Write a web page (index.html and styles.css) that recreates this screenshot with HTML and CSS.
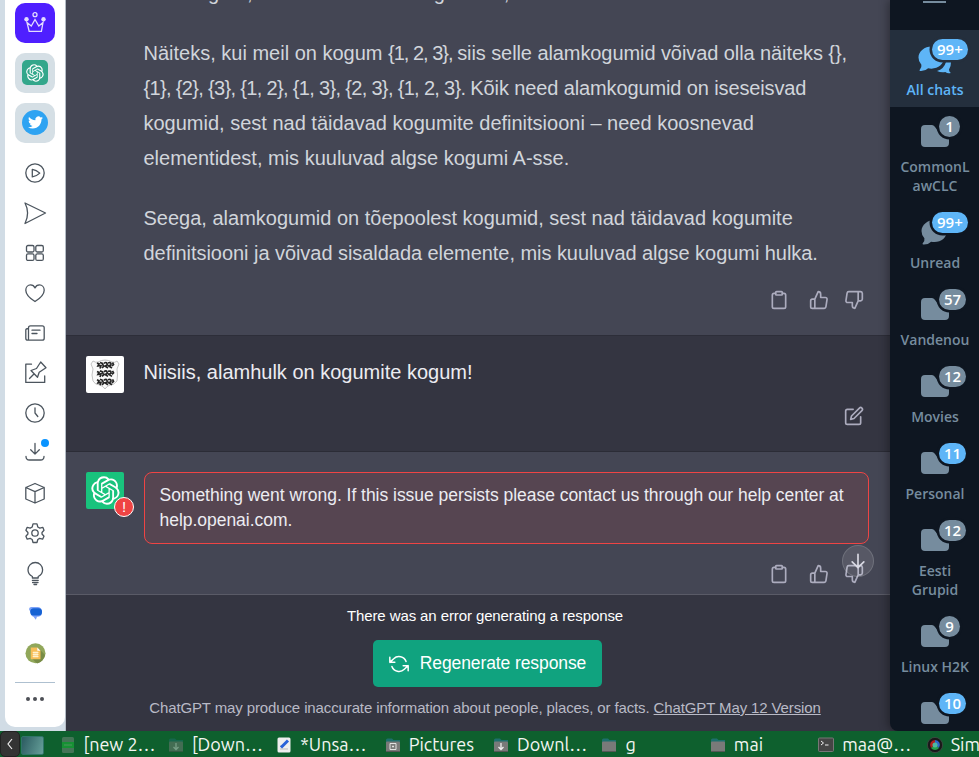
FILE: index.html
```html
<!DOCTYPE html>
<html lang="et">
<head>
<meta charset="utf-8">
<title>Chat</title>
<link rel="stylesheet" href="styles.css">
</head>
<body>
<svg class="defs" width="0" height="0">
  <symbol id="openai" viewBox="0 0 41 41"><path fill="currentColor" d="M37.532 16.87a9.963 9.963 0 0 0-.856-8.184 10.078 10.078 0 0 0-10.855-4.835A9.964 9.964 0 0 0 18.306.5a10.079 10.079 0 0 0-9.614 6.977 9.967 9.967 0 0 0-6.664 4.834 10.08 10.08 0 0 0 1.24 11.817 9.965 9.965 0 0 0 .856 8.185 10.079 10.079 0 0 0 10.855 4.835 9.965 9.965 0 0 0 7.516 3.35 10.078 10.078 0 0 0 9.617-6.981 9.967 9.967 0 0 0 6.663-4.834 10.079 10.079 0 0 0-1.243-11.813ZM22.498 37.886a7.474 7.474 0 0 1-4.799-1.735c.061-.033.168-.091.237-.134l7.964-4.6a1.294 1.294 0 0 0 .655-1.134V19.054l3.366 1.944a.12.12 0 0 1 .066.092v9.299a7.505 7.505 0 0 1-7.49 7.496ZM6.392 31.006a7.471 7.471 0 0 1-.894-5.023c.06.036.162.099.237.141l7.964 4.6a1.297 1.297 0 0 0 1.308 0l9.724-5.614v3.888a.12.12 0 0 1-.048.103l-8.051 4.649a7.504 7.504 0 0 1-10.24-2.744ZM4.297 13.62A7.469 7.469 0 0 1 8.2 10.333c0 .068-.004.19-.004.274v9.201a1.294 1.294 0 0 0 .654 1.132l9.723 5.614-3.366 1.944a.12.12 0 0 1-.114.01L7.04 23.856a7.504 7.504 0 0 1-2.743-10.237Zm27.658 6.437-9.724-5.615 3.367-1.943a.121.121 0 0 1 .113-.01l8.052 4.648a7.498 7.498 0 0 1-1.158 13.528v-9.476a1.293 1.293 0 0 0-.65-1.132Zm3.35-5.043c-.059-.037-.162-.099-.236-.141l-7.965-4.6a1.298 1.298 0 0 0-1.308 0l-9.723 5.614v-3.888a.12.12 0 0 1 .048-.103l8.05-4.645a7.497 7.497 0 0 1 11.135 7.763Zm-21.063 6.929-3.367-1.944a.12.12 0 0 1-.065-.092v-9.299a7.497 7.497 0 0 1 12.293-5.756 6.94 6.94 0 0 0-.236.134l-7.965 4.6a1.294 1.294 0 0 0-.654 1.132l-.006 11.225Zm1.829-3.943 4.33-2.501 4.332 2.5v5l-4.331 2.5-4.331-2.5V18Z"/></symbol>
  <symbol id="clipboard" viewBox="0 0 24 24"><path d="M16 4h2a2 2 0 0 1 2 2v14a2 2 0 0 1-2 2H6a2 2 0 0 1-2-2V6a2 2 0 0 1 2-2h2"/><rect x="8" y="2" width="8" height="4" rx="1"/></symbol>
  <symbol id="up" viewBox="0 0 24 24"><path d="M14 9V5a3 3 0 0 0-3-3l-4 9v11h11.28a2 2 0 0 0 2-1.7l1.38-9a2 2 0 0 0-2-2.3zM7 22H4a2 2 0 0 1-2-2v-7a2 2 0 0 1 2-2h3"/></symbol>
  <symbol id="down" viewBox="0 0 24 24"><path d="M10 15v4a3 3 0 0 0 3 3l4-9V2H5.72a2 2 0 0 0-2 1.7l-1.38 9a2 2 0 0 0 2 2.3zm7-13h2.67A2.31 2.31 0 0 1 22 4v7a2.31 2.31 0 0 1-2.33 2H17"/></symbol>
  <symbol id="folder" viewBox="0 0 28 22"><path fill="currentColor" d="M4 0h7q1.600 0 2.600 1.500l2.400 3q1 1.500 3 1.500h5q4 0 4 4v8q0 4-4 4H4q-4 0-4-4V4q0-4 4-4z"/></symbol>
  <symbol id="bubble" viewBox="0 0 28 27"><path fill="currentColor" d="M14 1C21 1 27 6 27 12.500S21 24 14 24q-2 0-3.500-.5Q7 27 2 26.500q-1-.5 0-1.500 2-2 1.500-5Q.5 17 .5 12.500C.5 6 7 1 14 1z"/></symbol>
  <symbol id="dir" viewBox="0 0 16 16"><path d="M1 3q0-1.500 1.500-1.500H7L8.500 3H15v4H1z" fill="#1e6f6d"/><rect x="1" y="4.500" width="14" height="10.500" rx="1" fill="#797a79"/><path d="M1 14.500h14" stroke="#565856"/></symbol>
</svg>
<div class="screen">
  <div class="work">
    <aside class="rail">
      <div class="rail-card">
        <div class="tile crown"><svg width="24" height="24" viewBox="0 0 24 24"><g fill="none" stroke="#e3dcff" stroke-width="1.300"><path d="M4 11.500l2.200 8.800h12.200l1.600-8.800-4.200 3.600L12 8.500l-3.700 6.600z"/><circle cx="12" cy="3.700" r="2"/></g><circle cx="3.500" cy="8.300" r="2.200" fill="#e3dcff"/><circle cx="20.500" cy="8.300" r="2.200" fill="#e3dcff"/></svg></div>
        <div class="tile"><span class="gpt"><svg width="18" height="18"><use href="#openai"/></svg></span></div>
        <div class="tile last"><span class="bird"><svg width="15" height="15" viewBox="0 0 24 24"><path fill="#fff" d="M23.953 4.570a10 10 0 01-2.825.775 4.958 4.958 0 002.163-2.723c-.951.555-2.005.959-3.127 1.184a4.920 4.920 0 00-8.384 4.482C7.690 8.095 4.067 6.130 1.640 3.162a4.822 4.822 0 00-.666 2.475c0 1.710.870 3.213 2.188 4.096a4.904 4.904 0 01-2.228-.616v.06a4.923 4.923 0 003.946 4.827 4.996 4.996 0 01-2.212.085 4.936 4.936 0 004.604 3.417 9.867 9.867 0 01-6.102 2.105c-.39 0-.779-.023-1.170-.067a13.995 13.995 0 007.557 2.209c9.053 0 13.998-7.496 13.998-13.985 0-.21 0-.42-.015-.63A9.935 9.935 0 0024 4.590z"/></svg></span></div>
        <div class="cell"><svg viewBox="0 0 24 24"><circle cx="12" cy="12" r="9.200"/><path d="M9.300 8.300v7.600q4-.5 7.500-3.800-3.500-3.300-7.500-3.800z"/></svg></div>
        <div class="cell"><svg viewBox="0 0 24 24"><path d="M2 2l20.500 10L2 22.500Q7.200 12 2 2z"/></svg></div>
        <div class="cell"><svg viewBox="0 0 24 24"><rect x="3.500" y="4.500" width="7.500" height="6.500" rx="1.500"/><rect x="12.800" y="4.500" width="7.500" height="6.500" rx="1.500"/><rect x="3.500" y="12.900" width="7.500" height="6.500" rx="1.500"/><rect x="12.800" y="12.900" width="7.500" height="6.500" rx="1.500"/></svg></div>
        <div class="cell"><svg viewBox="0 0 24 24"><path d="M12 20.500C8 18 2.800 14 2.800 9.200 2.800 6 5 3.900 7.500 3.900c2 0 3.700 1.100 4.500 3 .8-1.900 2.500-3 4.500-3 2.500 0 4.700 2.100 4.700 5.300 0 4.800-5.200 8.800-9.200 11.300z"/></svg></div>
        <div class="cell"><svg viewBox="0 0 24 24"><path d="M5.500 19.200V6.800q0-2 2-2h11.700q2 0 2 2v10.400q0 2-2 2H4.800q-2 0-2-2V9q0-1.500 2.500-1.500M9 9.200h8M9 12.500h5"/></svg></div>
        <div class="cell"><svg viewBox="0 0 24 24"><path d="M8.500 3.200H2.800v18.200h18.900V15M6.500 17.500l4.700-4.700M8 9.500l6.500 6.800 1.700-5 6.800-4.500-5.300-5.800-4.200 6.500z"/></svg></div>
        <div class="cell"><svg viewBox="0 0 24 24"><circle cx="12" cy="12" r="9.200"/><path d="M12 6.800V12l2.800 3.500"/></svg></div>
        <div class="cell"><svg viewBox="0 0 24 24"><path d="M12 2.500v10.500M7.700 8.800l4.300 4.300 4.300-4.300M3 15.500q0 3.500 3.500 3.500h11q3.500 0 3.500-3.500"/></svg><i class="dot"></i></div>
        <div class="cell"><svg viewBox="0 0 24 24"><path d="M12 2.500l9.200 4v11.500L12 22 2.800 18V6.500zM2.800 6.500l9.200 4.200 9.200-4.200M12 10.700V22"/></svg></div>
        <div class="cell"><svg viewBox="0 0 24 24"><circle cx="12" cy="12" r="3.200"/><path d="M10 2.800h4l.8 3.200 2 1.100 3-.8 1.200 3-2 2.200v1.500l2 2.200-1.400 3-3-.8-1.800 1.100-.8 3h-4l-.8-3-2-1.100-3 .8-1.300-3 2-2.200v-1.500L2.900 9.300l1.300-3 3 .8 2-1.100z"/></svg></div>
        <div class="cell"><svg viewBox="0 0 24 24"><path d="M9.400 17v-1.500Q5 13.500 5 8.800a7.300 7.300 0 0 1 14.600 0q0 4.700-4.400 6.700V17zM9.400 19.400h5.800M9.600 21.500h5.400M11 23.500h2.600"/></svg></div>
        <div class="cell"><svg viewBox="0 0 24 24" class="fill"><path fill="#7da2f8" d="M8 6h7q4 .5 4 5t-4 4.700h-1l-1.200 3-2.300-3q-2.500-.5-2.500-3.500L6 8.200Q6 6.500 8 6z"/><rect x="7.200" y="7.200" width="11.800" height="7.300" rx="3.500" fill="#1662d3"/></svg></div>
        <div class="cell"><svg viewBox="0 0 24 24" class="fill"><circle cx="12.500" cy="12.300" r="10" fill="#91a75a"/><path d="M16 7.500l6 6.500q-2 7-8 8.500l-5-5z" fill="#788c47"/><path d="M7.800 6.500h6.500l3.200 3.300v8.500H7.800z" fill="#f7be58"/><path d="M14.300 6.500v3.300h3.200z" fill="#fff"/><path d="M10.300 11.500h4.600M10.300 13.500h4.600M10.300 15.500h4.600" stroke="#fff1cf" stroke-width="1.300"/></svg></div>
        <hr>
        <div class="dots"><i></i><i></i><i></i></div>
      </div>
    </aside>
    <main class="chat">
      <section class="row answer">
        <div class="prose">
          <p>alamkogum, kui see ka osaleb algse osa, sest see on ise osa.</p>
          <p>Näiteks, kui meil on kogum <span class="set1">{1, 2, 3}, </span><span class="t1">siis selle alamkogumid võivad olla näiteks {},</span><br><span class="set2">{1}, {2}, {3}, {1, 2}, {1, 3}, {2, 3}, {1, 2, 3}. </span><span class="t2">Kõik need alamkogumid on iseseisvad</span><br>kogumid, sest nad täidavad kogumite definitsiooni – need koosnevad<br>elementidest, mis kuuluvad algse kogumi A-sse.</p>
          <p>Seega, alamkogumid on tõepoolest kogumid, sest nad täidavad kogumite<br><span class="t3">definitsiooni ja võivad sisaldada elemente, mis kuuluvad algse kogumi hulka.</span></p>
        </div>
        <div class="actions"><svg class="ico"><use href="#clipboard"/></svg><svg class="ico"><use href="#up"/></svg><svg class="ico"><use href="#down"/></svg></div>
      </section>
      <section class="row user">
        <div class="avatar arms"><svg width="38" height="37" viewBox="0 0 38 37"><path d="M7 5q3 2 5 1 7-4 14 0 3 1 5-1l2 3-2 5q1 6 0 12-3 4-7 4-3 1-5 4-2-3-5-4-5 0-7-4-2-6 0-12L5 8z" fill="#fafafa" stroke="#bdbdbd" stroke-width=".9"/><g fill="none" stroke="#252525" stroke-width="1.700"><path id="lion" d="M11 7l2 1-1 2 3-.5-1 3M14 6.500l2.500 1 1 3-1.500 1.500M18 7.500q2-2 3 0t-2 2.500l3 2M22 7q3-1 3 1t-3 1.500l4 2.500M26.500 6.500l1 2-1.500 1.500"/><use href="#lion" y="8.400"/><use href="#lion" y="16.800"/></g></svg></div>
        <div class="say">Niisiis, alamhulk on kogumite kogum!</div>
        <svg class="ico edit" viewBox="0 0 24 24"><path d="M11 4H4a2 2 0 0 0-2 2v14a2 2 0 0 0 2 2h14a2 2 0 0 0 2-2v-7M18.500 2.500a2.121 2.121 0 0 1 3 3L12 15l-4 1 1-4 9.500-9.500z"/></svg>
      </section>
      <section class="row failed">
        <div class="avatar bot"><svg width="29" height="29"><use href="#openai"/></svg><b class="bang">!</b></div>
        <div class="failed-body">
          <div class="error">Something went wrong. If this issue persists please contact us through our help center at<br>help.openai.com.</div>
          <div class="actions"><svg class="ico"><use href="#clipboard"/></svg><svg class="ico"><use href="#up"/></svg><svg class="ico"><use href="#down"/></svg></div>
        </div>
        <div class="jump"><svg class="ico" viewBox="0 0 24 24"><path d="M12 4v16M5 13l7 7 7-7"/></svg></div>
      </section>
      <footer class="foot">
        <div class="notice">There was an error generating a response</div>
        <button class="regen"><svg class="ico" viewBox="0 0 24 24"><path d="M1 4v6h6M23 20v-6h-6M20.490 9A9 9 0 0 0 5.640 5.640L1 10m22 4l-4.640 4.360A9 9 0 0 1 3.510 15"/></svg><span>Regenerate response</span></button>
        <div class="legal">ChatGPT may produce inaccurate information about people, places, or facts. <u>ChatGPT May 12 Version</u></div>
      </footer>
    </main>
    <nav class="folders">
      <div class="menu"></div>
      <div class="f on"><div class="pic"><svg class="b1" width="27" height="27"><use href="#bubble"/></svg><svg class="b2" width="15" height="12" viewBox="0 0 15 12"><path fill="currentColor" d="M0 9Q7 7 9 0h5q0 5-2 7.500 0 2 1.800 3.500-3 1-5.500-1-4 1-8.300-1z"/></svg><b class="wide">99+</b></div>All chats</div>
      <div class="f"><div class="pic"><svg width="28" height="22"><use href="#folder"/></svg><b>1</b></div>CommonL<br>awCLC</div>
      <div class="f"><div class="pic"><svg class="b3" width="27" height="26"><use href="#bubble"/></svg><b class="wide blue">99+</b></div>Unread</div>
      <div class="f"><div class="pic"><svg width="28" height="22"><use href="#folder"/></svg><b>57</b></div>Vandenou</div>
      <div class="f"><div class="pic"><svg width="28" height="22"><use href="#folder"/></svg><b>12</b></div>Movies</div>
      <div class="f"><div class="pic"><svg width="28" height="22"><use href="#folder"/></svg><b class="blue">11</b></div>Personal</div>
      <div class="f"><div class="pic"><svg width="28" height="22"><use href="#folder"/></svg><b>12</b></div>Eesti<br>Grupid</div>
      <div class="f"><div class="pic"><svg width="28" height="22"><use href="#folder"/></svg><b>9</b></div>Linux H2K</div>
      <div class="f"><div class="pic"><svg width="28" height="22"><use href="#folder"/></svg><b class="blue">10</b></div></div>
    </nav>
  </div>
  <div class="taskbar">
    <div class="back"><svg width="6" height="12" viewBox="0 0 6 12"><path d="M5 1L1 6l4 5" fill="none" stroke="#eee" stroke-width="1.200"/></svg></div>
    <div class="desk"></div>
    <div class="task"><svg class="dim" viewBox="0 0 16 16"><rect x="2" y="0" width="12" height="16" rx="1.500" fill="#7b8a80"/><rect x="2" y="5" width="12" height="6" fill="#1fc33b"/><path d="M4 8h8" stroke="#8fca8f"/></svg>[new 2…</div>
    <div class="task"><svg class="dim" viewBox="0 0 16 16"><use href="#dir"/><path d="M8 6v6M5.500 10L8 12.500 10.500 10" fill="none" stroke="#ddd" stroke-width="1.300"/></svg>[Down…</div>
    <div class="task"><svg viewBox="0 0 16 16"><rect x="1.500" y=".5" width="13" height="15" rx="1.500" fill="#eee"/><path d="M4 12h8M4 9h4" stroke="#bbb"/><path d="M5 10.500L12 3.500" stroke="#2862d9" stroke-width="3"/></svg>*Unsa…</div>
    <div class="task"><svg viewBox="0 0 16 16"><use href="#dir"/><path d="M5 6.500h6v6H5zM7.500 9h1v1h-1z" fill="none" stroke="#e2e2e2"/></svg>Pictures</div>
    <div class="task"><svg viewBox="0 0 16 16"><use href="#dir"/><path d="M8 6v6M5.500 10L8 12.500 10.500 10" fill="none" stroke="#eee" stroke-width="1.300"/></svg>Downl…</div>
    <div class="task"><svg viewBox="0 0 16 16"><use href="#dir"/></svg>g</div>
    <div class="task"><svg viewBox="0 0 16 16"><use href="#dir"/></svg>mai</div>
    <div class="task"><svg viewBox="0 0 16 16"><rect x=".5" y="1" width="15" height="13.500" rx="1" fill="#454545" stroke="#777"/><path d="M3 4l2.500 2L3 8M7 8h3.500" fill="none" stroke="#eee"/></svg>maa@…</div>
    <div class="task"><svg viewBox="0 0 16 16"><circle cx="8" cy="8" r="7.600" fill="#191919" stroke="#4b4b4b" stroke-width=".7"/><path d="M8 3a5 5 0 0 0-4 8l4-3z" fill="#b32020"/><path d="M8 3a5 5 0 0 1 4 8L8 8z" fill="#2f67c8"/><path d="M4 11a5 5 0 0 0 8 0L8 8z" fill="#24a04a"/><circle cx="8" cy="8" r="2.500" fill="#4fb8a0"/></svg>Sim</div>
  </div>
</div>
</body>
</html>
```
FILE: styles.css
```css
* { box-sizing: border-box; }
body { margin: 0; overflow: hidden; font-family: "Liberation Sans", Arial, sans-serif; }
.defs { position: absolute; }
.screen { width: 979px; height: 757px; display: flex; flex-direction: column; overflow: hidden; }
.work { height: 731px; display: flex; background: #343541; }

/* browser rail */
.rail { width: 66px; background: #d1dce5; padding: 0 0 4px 5px; border-right: 1px solid #b4bcc5; }
.rail-card { width: 60px; height: 727px; background: #fff; border-radius: 0 0 10px 10px; padding-top: 3px; display: flex; flex-direction: column; align-items: center; }
.tile { width: 40px; height: 40px; border-radius: 10px; background: #d5dfe5; margin-bottom: 10px; display: flex; align-items: center; justify-content: center; flex: none; }
.tile.last { margin-bottom: 9.500px; }
.tile.crown { background: #4f1fff; }
.gpt, .bird { width: 26px; height: 25px; display: flex; align-items: center; justify-content: center; color: #fff; background: #33a78b; border-radius: 5px; margin-bottom: 1px; }
.bird { background: #2ea3f2; border-radius: 50%; }
.cell { position: relative; height: 40px; flex: none; display: flex; align-items: center; padding-right: 1px; }
.cell svg { width: 24px; height: 24px; fill: none; stroke: #4c555e; stroke-width: 1.300; stroke-linejoin: round; stroke-linecap: round; overflow: visible; }
.cell svg.fill { stroke: none; }
.dot { position: absolute; left: 18px; top: 6.500px; width: 8px; height: 8px; border-radius: 50%; background: #0a94ff; }
.rail hr { width: 40px; height: 1px; border: 0; background: #aec0d0; margin: 9.500px 0 14px; flex: none; }
.dots { display: flex; gap: 3px; }
.dots i { width: 4px; height: 4px; border-radius: 50%; background: #4c4f55; }

/* conversation */
.chat { width: 824px; display: flex; flex-direction: column; overflow: hidden; }
.row { background: #444654; border-bottom: 1px solid #2d2e39; flex: none; display: flex; position: relative; }
.ico { width: 20px; height: 20px; fill: none; stroke: #acacbe; stroke-width: 2; stroke-linecap: round; stroke-linejoin: round; flex: none; }
.answer { height: 336px; flex-direction: column; }
.prose { margin: -24px 0 0 77.500px; color: #d1d5db; font-size: 20px; line-height: 35px; white-space: nowrap; }
.prose p { margin: 0 0 25px; }
.set1 { letter-spacing: -1px; }
.set2 { letter-spacing: -.67px; }
.t1 { letter-spacing: -.08px; }
.t2 { letter-spacing: -.12px; }
.t3 { letter-spacing: -.05px; }
.actions { display: flex; justify-content: flex-end; gap: 0 20px; padding-right: 26px; }
.actions .ico:last-child { margin-left: -5px; }
.answer .actions { margin-top: -6px; }
.user { height: 116px; background: #343541; border-bottom-color: #2b2c36; padding: 20px 0 0 20px; }
.avatar { width: 38px; height: 37px; border-radius: 2px; position: relative; display: flex; align-items: center; justify-content: center; flex: none; }
.arms { background: #fff; }
.say { color: #ececf1; font-size: 20px; line-height: 35px; margin: -1px 0 0 19.500px; flex: 1; white-space: nowrap; }
.edit { margin: 50px 26px 0 0; }
.failed { height: 143px; padding: 20px 21px 0 20px; border-bottom-color: #5a5b67; }
.bot { background: #19c37d; color: #fff; }
.bang { position: absolute; left: 28px; top: 25px; width: 20px; height: 20px; border: 1px solid #fff; border-radius: 50%; background: #ef4444; font: 15px/18px "Liberation Sans", sans-serif; text-align: center; }
.failed-body { margin-left: 20px; width: 725px; }
.error { height: 72px; border: 1px solid #ef4444; border-radius: 8px; background: rgba(239, 68, 68, .11); color: #ececf1; font-size: 17.500px; line-height: 25px; letter-spacing: -.03px; padding: 10px 14.500px; white-space: nowrap; }
.failed .actions { margin-top: 20px; padding-right: 5px; }
.jump { position: absolute; left: 776px; top: 93px; width: 32px; height: 32px; border-radius: 50%; border: 1px solid rgba(255, 255, 255, .14); background: rgba(255, 255, 255, .1); display: flex; align-items: center; justify-content: center; }
.jump .ico { stroke: #d9d9e3; }
.foot { flex: 1; display: flex; flex-direction: column; align-items: center; padding: 9px 0 0 0; background: #343541; white-space: nowrap; }
.notice { color: #fff; font-size: 15px; line-height: 24px; letter-spacing: -.1px; margin-left: 14px; }
.regen { width: 229px; height: 47px; margin: 12px 0 0 19px; border: 0; border-radius: 5px; background: #10a37f; color: #fff; font: 17.500px "Liberation Sans", sans-serif; letter-spacing: -.1px; display: flex; align-items: center; justify-content: center; gap: 11px; padding: 0; }
.regen .ico { stroke: #fff; stroke-width: 1.800; }
.legal { color: #b9bac6; font-size: 15px; line-height: 20px; letter-spacing: -.12px; margin: 11px 0 0 14px; }

/* messenger folders */
.folders { width: 89px; background: #0e1621; border-radius: 0 0 0 8px; box-shadow: -2px 0 10px rgba(0, 0, 0, .35); overflow: hidden; position: relative; font: 600 14px/19px "Open Sans", sans-serif; color: #768c9e; text-align: center; display: flex; flex-direction: column; clip-path: inset(0 0 0 -14px); }
.menu { height: 30px; flex: none; }
.menu::before { content: ""; display: block; width: 23px; height: 2px; margin: 1px 0 0 33px; background: #768c9e; }
.f { padding: 0 0 8px 1px; flex: none; }
.pic { height: 50px; position: relative; padding: 18px 0 0 29.500px; text-align: left; color: #768c9e; }
.pic svg { display: block; }
.pic b { position: absolute; left: 48px; top: 9px; min-width: 21px; height: 21px; padding: 0 5px; border-radius: 11px; background: #768c9e; color: #fff; font: 600 15px/21px "Open Sans", sans-serif; text-align: center; box-shadow: 0 0 0 2.500px #0e1621; }
.pic b.wide { left: 41px; }
.pic b.blue { background: #5eb5f7; }
.on { background: #242f3d; color: #5eb5f7; }
.on .pic { color: #5eb5f7; }
.on .pic b { background: #5eb5f7; box-shadow: 0 0 0 2.500px #242f3d; }
.pic .b1 { margin: -3px 0 0 -2.500px; }
.pic .b2 { position: absolute; left: 46px; top: 32px; }
.pic .b3 { margin-top: -2px; }

/* desktop panel */
.taskbar { height: 26px; background: #0e602e; display: flex; align-items: center; color: #f4f6f3; font: 18px "Ubuntu", "Noto Sans", sans-serif; white-space: nowrap; overflow: hidden; }
.back { width: 20px; height: 26px; background: #343434; border: 1px solid #222; border-radius: 5px; display: flex; align-items: center; justify-content: center; flex: none; }
.desk { width: 23px; height: 19px; margin: 3px 15.500px 0 1px; background: linear-gradient(110deg, #2b5a60, #66a09a); border: 1px solid #2f7568; border-radius: 2px; flex: none; }
.task { width: 108.400px; flex: none; display: flex; align-items: center; gap: 8px; }
.task svg { width: 16px; height: 16px; flex: none; margin-top: 1px; }
.task svg.dim { opacity: .5; }
```
